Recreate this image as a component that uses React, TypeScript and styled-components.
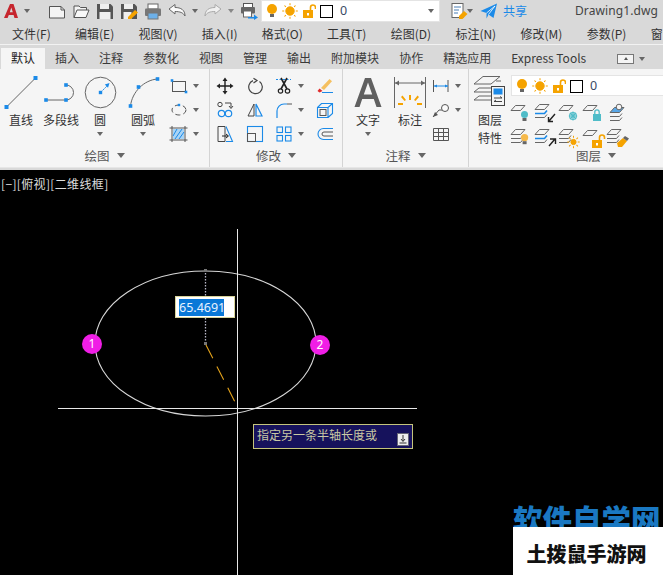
import React from "react";
import styled, { createGlobalStyle } from "styled-components";

const CJK = `"Noto Sans CJK SC", "Noto Sans", sans-serif`;
const BLUE = "#1b8ae8";
const GRAY = "#666";
const ORANGE = "#f5a300";
const TEAL = "#4fbcc8";

const Global = createGlobalStyle`
  html, body { margin: 0; padding: 0; background: #000; }
  body { font-family: ${CJK}; }
`;

const Page = styled.div`
  width: 663px; height: 575px; overflow: hidden; position: relative;
  display: flex; flex-direction: column; background: #d9d9d9;
`;
const TitleBar = styled.header`
  height: 22px; display: flex; align-items: flex-start; flex: none;
`;
const LogoSlot = styled.div`
  width: 48px; height: 22px; padding-left: 3px; box-sizing: border-box;
  display: flex; align-items: center; gap: 5px;
`;
const QuickSlot = styled.div<{ $w: number }>`
  width: ${(p) => p.$w}px; height: 22px; display: flex; align-items: center; gap: 6px; flex: none;
`;
const Caret = styled.span<{ $light?: boolean; $big?: boolean }>`
  display: inline-block; width: 0; height: 0; flex: none;
  border-left: ${(p) => (p.$big ? 4.5 : 3.5)}px solid transparent;
  border-right: ${(p) => (p.$big ? 4.5 : 3.5)}px solid transparent;
  border-top: ${(p) => (p.$big ? 5 : 4)}px solid ${(p) => (p.$light ? "#888" : "#666")};
`;
const LayerCombo = styled.div<{ $w: number; $h: number }>`
  width: ${(p) => p.$w}px; height: ${(p) => p.$h}px; box-sizing: border-box; flex: none;
  background: #fff; border: 1px solid #e4e4e4; display: flex; align-items: center;
  padding: 0 5px 0 4px; gap: 3px; font-size: 12px; color: #333;
`;
const ComboValue = styled.span`
  flex: 1; margin-left: 3px; line-height: 14px; font-family: "Noto Sans", sans-serif; font-size: 12.5px; color: #3a4a66;
`;
const ShareLabel = styled.span`
  color: #1b8ae8; font-size: 12px; line-height: 22px; margin-left: 5px;
`;
const DocName = styled.span`
  margin-left: auto; padding-right: 5px; font-size: 12px; line-height: 22px; color: #444;
  font-family: "Noto Sans", sans-serif; letter-spacing: 0.1px;
`;
const MenuBar = styled.nav`
  height: 22px; flex: none; display: flex; gap: 24.3px; padding-left: 12px;
  font-size: 12px; line-height: 24px; color: #333; white-space: nowrap; overflow: hidden;
  border-bottom: 1px solid #f2f2f2;
`;
const TabBar = styled.nav`
  height: 24px; flex: none; display: flex; padding-left: 1px; align-items: flex-end;
`;
const Tab = styled.div<{ $active?: boolean }>`
  height: 21px; padding: 0 10px; font-size: 12px; line-height: 20px; white-space: nowrap;
  color: ${(p) => (p.$active ? "#222" : "#3a3a3a")};
  background: ${(p) => (p.$active ? "#f5f5f5" : "transparent")};
`;
const Collapse = styled.div`
  margin-left: 21px; height: 21px; display: flex; align-items: center; gap: 5px;
`;
const CollapseBox = styled.span`
  width: 15px; height: 8px; border: 1px solid #777; background: #f4f4f4;
  display: flex; align-items: center; justify-content: center;
`;
const TinyUp = styled.span`
  width: 0; height: 0; border-left: 2.5px solid transparent; border-right: 2.5px solid transparent;
  border-bottom: 3px solid #555;
`;
const Ribbon = styled.div`
  height: 99px; flex: none; display: flex; background: #f5f5f5; border-bottom: 1px solid #e6e6e6;
  box-sizing: border-box;
`;
const Panel = styled.section<{ $w: number; $last?: boolean }>`
  width: ${(p) => p.$w}px; flex: none; box-sizing: border-box; display: flex; flex-direction: column;
  border-right: ${(p) => (p.$last ? "none" : "1px solid #d4d4d4")};
`;
const PanelBody = styled.div`
  flex: 1; display: flex; padding-top: 5px; min-height: 0;
`;
const PanelTitle = styled.div<{ $pad?: number }>`
  height: 21px; flex: none; display: flex; align-items: center; justify-content: center; gap: 7px;
  padding-left: ${(p) => p.$pad ?? 0}px; padding-bottom: 3px; box-sizing: border-box;
  font-size: 12.5px; color: #555;
`;
const BigTool = styled.div<{ $w: number }>`
  width: ${(p) => p.$w}px; flex: none; display: flex; flex-direction: column; align-items: center;
`;
const BigIcon = styled.div`
  height: 37px; display: flex; justify-content: center; align-items: flex-start;
`;
const BigLabel = styled.div`
  height: 18px; font-size: 12px; line-height: 18px; color: #333; white-space: nowrap;
`;
const BigCaret = styled.div`
  height: 10px; display: flex; align-items: center;
`;
const SmallCol = styled.div`
  display: grid; grid-auto-rows: 24px; align-content: start;
`;
const SmallTool = styled.div<{ $w?: number; $pad?: number }>`
  display: flex; align-items: center; gap: 5px; height: 24px; box-sizing: border-box;
  width: ${(p) => (p.$w ? `${p.$w}px` : "auto")};
  padding-left: ${(p) => p.$pad ?? 0}px;
`;
const ModifyGrid = styled.div`
  display: grid; grid-template-columns: 30px 30px 40px 30px; grid-auto-rows: 24px;
  justify-items: center; align-items: center;
`;
const LayersRight = styled.div`
  flex: 1; display: flex; flex-direction: column; margin-top: 1px;
`;
const LayerGrid = styled.div`
  display: grid; grid-template-columns: repeat(5, 24px); grid-auto-rows: 25px; margin-top: 5px; margin-left: -1px;
  align-items: center; justify-items: center;
`;
const Canvas = styled.main`
  flex: 1; position: relative; background: #000; overflow: hidden; margin-top: 2px;
`;
const ViewLabel = styled.div`
  padding: 5px 0 0 1px; font-size: 12px; line-height: 18px; color: #ddd; white-space: nowrap; letter-spacing: 0.35px;
`;
const Drawing = styled.svg`
  position: absolute; left: 0; top: 0;
`;
const Bubble = styled.div<{ $x: number; $y: number }>`
  position: absolute; left: ${(p) => p.$x}px; top: ${(p) => p.$y}px; width: 20px; height: 20px;
  border-radius: 50%; background: #f01ee6; color: #fff; font-size: 12px; line-height: 20px; text-align: center;
  font-family: "Noto Sans", sans-serif;
`;
const InputBox = styled.div`
  position: absolute; left: 175px; top: 126px; width: 60px; height: 22px; box-sizing: border-box;
  background: #fff; border: 1px solid #d8d49a; padding: 2px 0 0 3px;
`;
const Selected = styled.span`
  display: block; width: 45px; height: 17px; background: #0a78d7; color: #e8f2ff;
  font-size: 12.5px; line-height: 17px; font-family: "Noto Sans", sans-serif;
`;
const Prompt = styled.div`
  position: absolute; left: 253px; top: 254px; width: 160px; height: 25px; box-sizing: border-box;
  background: #16125c; border: 1px solid #c4c47c; padding-left: 3px; display: flex;
  color: #c9c9a4; font-size: 12px; line-height: 19px;
`;
const PromptIcon = styled.span`
  position: absolute; right: 3px; top: 8px; width: 10px; height: 11px; background: #eee;
  border: 1px solid #667; display: flex; align-items: center; justify-content: center;
`;
const WatermarkBlue = styled.div`
  position: absolute; left: 513px; top: 330px; font-size: 29.5px; font-weight: 900; line-height: 36px; color: #1a78c2;
  white-space: nowrap; font-family: ${CJK};
`;
const WatermarkBox = styled.div`
  position: absolute; left: 513px; top: 357px; width: 150px; height: 48px; background: #fff;
  color: #111; font-size: 20px; font-weight: 900; text-align: center; line-height: 54px; white-space: nowrap;
  padding-right: 3px; box-sizing: border-box;
`;

/* --- drawing helpers --- */
const H = ({ x, y, s = 4 }: { x: number; y: number; s?: number }) => (
  <rect x={x - s / 2} y={y - s / 2} width={s} height={s} fill={BLUE} />
);
const Ic = ({ w = 18, h = 18, children }: { w?: number; h?: number; children: React.ReactNode }) => (
  <svg width={w} height={h} viewBox={`0 0 ${w} ${h}`} fill="none" style={{ display: "block", flex: "none" }}>
    {children}
  </svg>
);

const Bulb = ({ c = ORANGE, x = 0, y = 0, r = 5 }: { c?: string; x?: number; y?: number; r?: number }) => (
  <g transform={`translate(${x} ${y})`}>
    <circle cx={r} cy={r} r={r} fill={c} />
    <rect x={r - 2} y={2 * r} width={4} height={3} fill="#666" />
  </g>
);
const Sun = ({ x = 0, y = 0, r = 4.2, c = ORANGE }: { x?: number; y?: number; r?: number; c?: string }) => (
  <g transform={`translate(${x} ${y})`} stroke={c} strokeWidth="1">
    <circle cx="0" cy="0" r={r} fill={c} />
    {[0, 45, 90, 135, 180, 225, 270, 315].map((a) => (
      <line key={a} x1={r + 1.6} y1="0" x2={r + 3.6} y2="0" transform={`rotate(${a})`} />
    ))}
  </g>
);
const OpenLock = ({ x = 0, y = 0, c = ORANGE }: { x?: number; y?: number; c?: string }) => (
  <g transform={`translate(${x} ${y})`}>
    <path d="M7.5 6V3.5a2.5 2.5 0 0 1 5 0V5" stroke={c} strokeWidth="1.6" />
    <rect x="0" y="6" width="10" height="8" fill={c} />
    <rect x="4" y="9" width="2" height="2.5" fill="#fff" />
  </g>
);
const LayerStatus = () => (
  <>
    <Ic w={12} h={16}><Bulb x={1} y={1} /></Ic>
    <Ic w={18} h={16}><Sun x={9} y={8} /></Ic>
    <Ic w={14} h={16}><OpenLock x={1} y={1} /></Ic>
    <Ic w={15} h={16}><rect x="1.5" y="2.5" width="12" height="12" fill="#fff" stroke="#000" /></Ic>
  </>
);

const Sheet = ({ y = 0, fill = "none", stroke = GRAY }: { y?: number; fill?: string; stroke?: string }) => (
  <path d={`M1 ${y + 6.5}L5.5 ${y + 1.5}H15L10.5 ${y + 6.5}Z`} fill={fill} stroke={stroke} />
);
const Stack = ({ blue = -1 }: { blue?: number }) => (
  <>
    <path d="M1 14.5H10.5L13 11.5" stroke={blue === 2 ? BLUE : GRAY} strokeWidth={blue === 2 ? 1.6 : 1} />
    <path d="M1 10.5H10.5L13 7.5" stroke={blue === 1 ? BLUE : GRAY} strokeWidth={blue === 1 ? 1.6 : 1} />
    <Sheet y={0} fill={blue === 0 ? "#5aa8e8" : "none"} />
  </>
);
const LI = ({ children }: { children: React.ReactNode }) => <Ic w={24} h={21}>{children}</Ic>;
const Arrow = ({ d }: { d: string }) => <path d={d} stroke="#222" strokeWidth="1.4" />;

const layerTools = [
  <LI key="a"><g transform="translate(0 1)"><Sheet /></g><Bulb c={TEAL} x={11} y={8} r={3.5} /></LI>,
  <LI key="b"><Stack blue={1} /><Arrow d="M21 11L15 18M14.5 14V18.5H19" /></LI>,
  <LI key="c"><g transform="translate(0 1)"><Sheet /></g><g stroke={TEAL} strokeWidth="1.1"><circle cx="15" cy="13" r="3.4" /><path d="M15 8.5V17.5M10.8 13H19.2M12 10L18 16M18 10L12 16" /></g></LI>,
  <LI key="d"><g transform="translate(0 1)"><Sheet /></g><rect x="11" y="11" width="8" height="7" fill={TEAL} /><path d="M12.8 11V9a2.2 2.2 0 0 1 4.4 0V11" stroke={TEAL} strokeWidth="1.3" /></LI>,
  <LI key="e"><g transform="translate(3 3)"><Stack blue={0} /></g><circle cx="13" cy="4" r="2.8" fill="#f5f5f5" stroke="#666" /></LI>,
  <LI key="f"><Stack /><Bulb c="#f6b94a" x={11} y={6} r={3.6} /></LI>,
  <LI key="g"><Stack blue={1} /><Arrow d="M15 18L21 11M16 11H21.5V16" /></LI>,
  <LI key="h"><Stack /><Sun x={15.5} y={14} r={2.6} /></LI>,
  <LI key="i"><g transform="translate(0 1)"><Sheet /></g><g transform="translate(10 6)"><OpenLock /></g></LI>,
  <LI key="j"><Stack /><path d="M11 15L17 10L21 13L16 19H12Z" fill={ORANGE} /><path d="M17 10L21 13L23 10.5L19 8Z" fill="#666" /></LI>,
];

const modifyTools: { icon: React.ReactNode; caret?: boolean }[] = [
  { icon: <Ic><path d="M9 2V16M2 9H16" stroke="#222" strokeWidth="1.4" /><path d="M9 0.5L6.5 4H11.5ZM9 17.5L6.5 14H11.5ZM0.5 9L4 6.5V11.5ZM17.5 9L14 6.5V11.5Z" fill="#222" /></Ic> },
  { icon: <Ic><path d="M7 3.6A6.8 6.8 0 1 0 13.5 4.4" stroke="#444" strokeWidth="1.2" /><path d="M7.5 1.2L11 3.6L7.5 6" stroke="#444" strokeWidth="1.2" /></Ic> },
  { caret: true, icon: <Ic><path d="M1 2.5H16" stroke={BLUE} strokeDasharray="2 1.5" /><path d="M6 1L12 12M12 1L6 12" stroke="#222" strokeWidth="1.6" /><circle cx="5.5" cy="14" r="2.2" stroke="#222" strokeWidth="1.2" /><circle cx="12.5" cy="14" r="2.2" stroke="#222" strokeWidth="1.2" /></Ic> },
  { icon: <Ic><path d="M5 11L13.5 2L16 4.2L8 13Z" fill="#f5c060" /><path d="M3.5 11.5L6.5 14L3.5 15.5L1.5 14Z" fill="#e02a2a" /><path d="M6 15.5H17" stroke={BLUE} strokeWidth="1" /></Ic> },
  { icon: <Ic><circle cx="4" cy="3.5" r="2.2" stroke="#444" /><path d="M9 2H15V6.5M13 5L15 7.5L17 5" stroke="#444" /><circle cx="5.5" cy="12.5" r="3.2" stroke={BLUE} strokeWidth="1.2" /><circle cx="12.5" cy="12.5" r="3.2" stroke={BLUE} strokeWidth="1.2" /></Ic> },
  { icon: <Ic><path d="M8 3L2 15H8Z" stroke="#444" /><path d="M10 3L16 15H10Z" stroke={BLUE} strokeWidth="1.2" /></Ic> },
  { caret: true, icon: <Ic><path d="M2 17V10A7 7 0 0 1 9 3H12" stroke={BLUE} strokeWidth="1.2" /><path d="M12 3H17" stroke="#555" /></Ic> },
  { icon: <Ic><path d="M1.5 6.5V16.5H12V6.5ZM1.5 6.5L5.5 2.5H16.5V12.5L12 16.5M12 6.5L16.5 2.5" stroke={BLUE} strokeWidth="1.1" /><rect x="4" y="8.5" width="6" height="6" stroke="#555" /></Ic> },
  { icon: <Ic><path d="M2 1.5H9V16.5H2Z" stroke="#444" /><path d="M10 1.5L16.5 16.5H10" stroke={BLUE} strokeWidth="1.1" /><path d="M6 11H12M10 9L12.5 11L10 13" stroke="#222" /></Ic> },
  { icon: <Ic w={18}><rect x="1.5" y="1.5" width="15" height="15" stroke={BLUE} strokeWidth="1.1" /><rect x="1.5" y="8.5" width="8" height="8" stroke="#555" /></Ic> },
  { caret: true, icon: <Ic><g stroke={BLUE} strokeWidth="1.1"><rect x="2" y="2" width="5.5" height="5.5" /><rect x="10.5" y="2" width="5.5" height="5.5" /><rect x="2" y="10.5" width="5.5" height="5.5" /><rect x="10.5" y="10.5" width="5.5" height="5.5" /></g></Ic> },
  { icon: <Ic><path d="M17 3.5H7.5A5.5 5.5 0 0 0 7.5 14.5H17" stroke={BLUE} strokeWidth="1.1" /><path d="M17 7H8A2 2 0 0 0 8 11H17" stroke="#555" /></Ic> },
];

const menus = ["文件(F)", "编辑(E)", "视图(V)", "插入(I)", "格式(O)", "工具(T)", "绘图(D)", "标注(N)", "修改(M)", "参数(P)", "窗"];
const tabs = ["默认", "插入", "注释", "参数化", "视图", "管理", "输出", "附加模块", "协作", "精选应用", "Express Tools"];

export default function App() {
  return (
    <Page>
      <Global />
      <TitleBar>
        <LogoSlot>
          <Ic w={16} h={18}>
            <path d="M1 16L7 2H10.5L15 16H11.5L10.6 13H5.8L4.6 16ZM6.8 10.3H9.8L8.3 5.6Z" fill="#c6262e" />
          </Ic>
          <Caret />
        </LogoSlot>
        <QuickSlot $w={24}><Ic><path d="M1.5 4.5H13L16.5 8V16H1.5Z" fill="#f4f4f4" stroke="#555" /><path d="M13 4.5V8H16.5" stroke="#555" /></Ic></QuickSlot>
        <QuickSlot $w={24}><Ic><path d="M2 15.5V4H7L8.5 5.5H14.5V8" stroke="#555" fill="#f4f4f4" /><path d="M2 15.5L5 8H17L14 15.5Z" fill="#f8f8f8" stroke="#555" /></Ic></QuickSlot>
        <QuickSlot $w={24}><Ic><path d="M1 2H14.5L17 4.5V17H1Z" fill="#555" /><rect x="4" y="2" width="9" height="5" fill="#eee" /><rect x="3.5" y="10" width="11" height="7" fill="#eee" /></Ic></QuickSlot>
        <QuickSlot $w={24}><Ic><path d="M1 2H14.5L17 4.5V17H1Z" fill="#555" /><rect x="4" y="2" width="9" height="5" fill="#eee" /><rect x="3.5" y="10" width="8" height="7" fill="#eee" /><path d="M8 15L15 8L18 10.5L11 17H8Z" fill={ORANGE} /></Ic></QuickSlot>
        <QuickSlot $w={24}><Ic><rect x="4" y="2" width="10" height="5" fill="#fff" stroke="#666" /><rect x="1" y="6.5" width="16" height="7.5" rx="1" fill="#777" /><rect x="4" y="11" width="10" height="6" fill="#6db0e8" stroke="#777" /></Ic></QuickSlot>
        <QuickSlot $w={36}><Ic><path d="M1 7L7 2.5V5.5C13 5.5 17 8 17 14C15 10.5 12 9.5 7 9.5V12Z" fill="#fafafa" stroke="#666" /></Ic><Caret /></QuickSlot>
        <QuickSlot $w={36}><Ic><path d="M17 7L11 2.5V5.5C5 5.5 1 8 1 14C3 10.5 6 9.5 11 9.5V12Z" fill="#f0f0f0" stroke="#aaa" /></Ic><Caret $light /></QuickSlot>
        <QuickSlot $w={21}><Ic><rect x="3.5" y="1.5" width="9" height="4" fill="#fff" stroke="#555" /><rect x="1" y="5" width="14" height="6.5" rx="1" fill="#666" /><rect x="3.5" y="9" width="8" height="6" fill="#fff" stroke="#666" /><path d="M8 15H14V12.5L18 15.5L14 18V16.5H8Z" fill={BLUE} /></Ic></QuickSlot>
        <LayerCombo $w={179} $h={22}>
          <LayerStatus />
          <ComboValue>0</ComboValue>
          <Caret />
        </LayerCombo>
        <QuickSlot $w={27}>
          <span style={{ width: 5, flex: "none" }} />
          <Ic><rect x="1" y="1.5" width="11" height="14" fill="#fff" stroke="#666" /><path d="M3 5H10M3 8H8M3 11H7" stroke="#4a7fb5" /><path d="M8 14L13 9L16.5 12L11.5 17H8Z" fill={ORANGE} /></Ic>
        </QuickSlot>
        <QuickSlot $w={13}><Caret /></QuickSlot>
        <QuickSlot $w={18}>
          <Ic><path d="M0.5 9L17 1.5L13.5 16L8.5 12.5L6.5 16.5V11Z" fill={BLUE} /><path d="M6.5 11L15 4L8.5 12.5" stroke="#fff" strokeWidth="0.8" /></Ic>
        </QuickSlot>
        <ShareLabel>共享</ShareLabel>
        <DocName>Drawing1.dwg</DocName>
      </TitleBar>

      <MenuBar>
        {menus.map((m) => <span key={m}>{m}</span>)}
      </MenuBar>

      <TabBar>
        {tabs.map((t, i) => <Tab key={t} $active={i === 0}>{t}</Tab>)}
        <Collapse><CollapseBox><TinyUp /></CollapseBox><Caret /></Collapse>
      </TabBar>

      <Ribbon>
        <Panel $w={210}>
          <PanelBody>
            <BigTool $w={42}>
              <BigIcon><Ic w={42} h={37}><path d="M6.5 33L35.5 4" stroke={GRAY} /><H x={6.5} y={33} /><H x={35.5} y={4} /></Ic></BigIcon>
              <BigLabel>直线</BigLabel>
            </BigTool>
            <BigTool $w={38}>
              <BigIcon><Ic w={38} h={37}><path d="M4 26H24A7.5 7.5 0 0 0 24 11" stroke={GRAY} /><H x={4} y={26} s={3.6} /><H x={24} y={26} s={3.6} /><H x={24} y={11} s={3.6} /></Ic></BigIcon>
              <BigLabel>多段线</BigLabel>
            </BigTool>
            <BigTool $w={40}>
              <BigIcon><Ic w={40} h={37}><circle cx="20.5" cy="18.5" r="15.3" stroke={GRAY} /><path d="M21 18L28 11" stroke={BLUE} strokeDasharray="2 1" /><path d="M29.5 9L24.8 10.5L28 13.7Z" fill={BLUE} /><H x={20.5} y={18.5} s={3.4} /></Ic></BigIcon>
              <BigLabel>圆</BigLabel>
              <BigCaret><Caret /></BigCaret>
            </BigTool>
            <BigTool $w={46}>
              <BigIcon><Ic w={46} h={37}><path d="M10.5 32C12 18 24 6 37.5 5" stroke={GRAY} /><H x={10.5} y={32} s={3.6} /><H x={18.5} y={13} s={3.6} /><H x={37.5} y={5} s={3.6} /></Ic></BigIcon>
              <BigLabel>圆弧</BigLabel>
              <BigCaret><Caret /></BigCaret>
            </BigTool>
            <SmallCol>
              <SmallTool>
                <Ic w={22} h={18}><rect x="6.5" y="4.5" width="13" height="10" stroke="#555" /><H x={6} y={3.5} s={2.6} /><H x={20} y={15} s={2.6} /></Ic>
                <Caret />
              </SmallTool>
              <SmallTool>
                <Ic w={22} h={18}><ellipse cx="13" cy="9" rx="7" ry="5" stroke="#555" strokeDasharray="5 3" /><H x={13} y={4} s={2.4} /></Ic>
                <Caret />
              </SmallTool>
              <SmallTool>
                <Ic w={22} h={18}><path d="M6 1V17M19 1V17M3.5 3H21.5M3.5 15H21.5" stroke="#555" /><rect x="7" y="4" width="11" height="10" fill="#a9d4f5" /><path d="M7 11L11 4M9 14L16 4M13 14L18 7" stroke={BLUE} /></Ic>
                <Caret />
              </SmallTool>
            </SmallCol>
          </PanelBody>
          <PanelTitle>绘图 <Caret $big /></PanelTitle>
        </Panel>

        <Panel $w={133}>
          <PanelBody>
            <ModifyGrid>
              {modifyTools.map((t, i) => (
                <SmallTool key={i} $w={t.caret ? 40 : undefined} $pad={t.caret ? 5 : 0}>
                  {t.icon}{t.caret && <Caret />}
                </SmallTool>
              ))}
            </ModifyGrid>
          </PanelBody>
          <PanelTitle>修改 <Caret $big /></PanelTitle>
        </Panel>

        <Panel $w={126}>
          <PanelBody>
            <BigTool $w={50}>
              <BigIcon>
                <Ic w={32} h={37}><path d="M2.5 33L13 4H19L29.5 33H24.5L21.8 25H10.2L7.5 33ZM11.8 20.5H20.2L16 8.5Z" fill="#606060" /></Ic>
              </BigIcon>
              <BigLabel>文字</BigLabel>
              <BigCaret><Caret /></BigCaret>
            </BigTool>
            <BigTool $w={34}>
              <BigIcon>
                <Ic w={34} h={37}>
                  <path d="M1.5 3V34M32.5 3V34" stroke="#666" />
                  <path d="M2 9H32" stroke="#666" /><path d="M2 9L6 6.5V11.5ZM32 9L28 6.5V11.5Z" fill="#666" />
                  <path d="M16 21H18L18 26H16ZM8 23L9.5 21.5L13 26L11.5 27ZM26 23L24.5 21.5L21 26L22.5 27ZM5 31V29H10V31ZM29 31V29H24V31Z" fill={ORANGE} />
                </Ic>
              </BigIcon>
              <BigLabel>标注</BigLabel>
            </BigTool>
            <SmallCol>
              <SmallTool $pad={5}>
                <Ic w={18} h={18}><path d="M1.5 3V15M16 3V15" stroke="#555" /><path d="M2 9H16" stroke={BLUE} /><path d="M2 9L5 7.5V10.5ZM16 9L13 7.5V10.5Z" fill={BLUE} /></Ic>
                <Caret />
              </SmallTool>
              <SmallTool $pad={5}>
                <Ic w={18} h={18}><path d="M1 16L7 9L11 9" stroke="#555" /><path d="M1 16L3 11L6 14Z" fill="#555" /><circle cx="13" cy="7" r="3.5" fill="#fafafa" stroke="#555" /></Ic>
                <Caret />
              </SmallTool>
              <SmallTool $pad={5}>
                <Ic w={18} h={18}><path d="M1.5 3.5H16.5V15.5H1.5ZM1.5 7.5H16.5M1.5 11.5H16.5M6.5 3.5V15.5M11.5 3.5V15.5" stroke="#555" /></Ic>
              </SmallTool>
            </SmallCol>
          </PanelBody>
          <PanelTitle>注释 <Caret $big /></PanelTitle>
        </Panel>

        <Panel $w={194} $last>
          <PanelBody>
            <BigTool $w={42}>
              <BigIcon>
                <Ic w={38} h={37}>
                  <path d="M3 10L12 2.5H29L20 10Z" stroke={GRAY} />
                  <path d="M3 18L8 14H24M3 26L8 22H20M3 18H20M3 26H20" stroke={GRAY} />
                  <path d="M25 7H30" stroke={GRAY} />
                  <rect x="20.5" y="12.5" width="13" height="19" fill="#f5f5f5" stroke="#444" />
                  <rect x="22.5" y="14.5" width="9" height="6" fill={BLUE} />
                  <path d="M23 24H31M29 22.5L31 24M23 27.5H31M25 26L23 27.5" stroke="#444" />
                </Ic>
              </BigIcon>
              <BigLabel>图层</BigLabel>
              <BigLabel>特性</BigLabel>
            </BigTool>
            <LayersRight>
              <LayerCombo $w={153} $h={21}>
                <LayerStatus />
                <ComboValue>0</ComboValue>
              </LayerCombo>
              <LayerGrid>{layerTools}</LayerGrid>
            </LayersRight>
          </PanelBody>
          <PanelTitle $pad={60}>图层 <Caret $big /></PanelTitle>
        </Panel>
      </Ribbon>

      <Canvas>
        <ViewLabel>[−][俯视][二维线框]</ViewLabel>
        <Drawing width="663" height="405" viewBox="0 170 663 405" fill="none">
          <ellipse cx="205.5" cy="343.5" rx="110.5" ry="72.5" stroke="#d8d8d8" strokeWidth="1.1" />
          <path d="M237.5 229V575" stroke="#e8e8e8" />
          <path d="M58 408.5H417" stroke="#e8e8e8" />
          <path d="M205.5 270V343" stroke="#b8b8c8" strokeWidth="1.3" strokeDasharray="1.5 1.5" />
          <rect x="204" y="269" width="3" height="3" fill="#777" />
          <rect x="204" y="342" width="3" height="3" fill="#777" />
          <path d="M206 345L235 402" stroke="#e3a21a" strokeWidth="1.1" strokeDasharray="15 9" />
        </Drawing>
        <Bubble $x={82} $y={164}>1</Bubble>
        <Bubble $x={310} $y={165}>2</Bubble>
        <InputBox><Selected>65.4691</Selected></InputBox>
        <Prompt>
          指定另一条半轴长度或
          <PromptIcon>
            <svg width="8" height="9" viewBox="0 0 8 9" fill="none"><path d="M4 0V6M2 4L4 6.5L6 4M0.5 8H7.5" stroke="#333" /></svg>
          </PromptIcon>
        </Prompt>
        <WatermarkBlue>软件自学网</WatermarkBlue>
        <WatermarkBox>土拨鼠手游网</WatermarkBox>
      </Canvas>
    </Page>
  );
}
